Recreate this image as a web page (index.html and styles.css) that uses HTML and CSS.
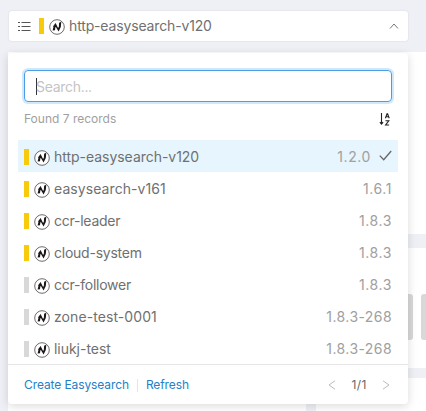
FILE: index.html
```html
<!DOCTYPE html>
<html lang="en">
<head>
<meta charset="utf-8">
<title>Cluster selector</title>
<link rel="stylesheet" href="styles.css">
</head>
<body>
<svg class="defs" width="0" height="0" aria-hidden="true">
  <symbol id="logo" viewBox="0 0 16 16">
    <circle cx="8" cy="8" r="7.3" fill="#fff" stroke="#4a4444" stroke-width=".8"/>
    <path d="M3.6 11.6 4.4 8.2 4.1 7.3 6.6 4 8.8 8.6 9.8 8.5 10.1 3.7 12.3 2.8 11.8 8 9.6 12.4 7.2 8.4 6.4 8 6 11.2Z" fill="#1c1718"/>
  </symbol>
</svg>
<header class="topbar">
  <div class="select">
    <svg class="list-icon" viewBox="0 0 13 11"><path d="M0 1.5H2M0 5.5H2M0 9.5H2M3.5 1.5H12.5M3.5 5.5H12.5M3.5 9.5H12.5"/></svg>
    <i class="status"></i><svg class="logo"><use href="#logo"/></svg>
    <span class="current">http-easysearch-v120</span>
    <svg class="chevron" viewBox="0 0 10 8"><path d="M1 6.5 5 2 9 6.5"/></svg>
  </div>
  <section class="dropdown">
    <div class="search"><i class="caret"></i><span>Search...</span></div>
    <div class="summary">
      <span>Found 7 records</span>
      <svg class="sort" viewBox="0 0 11 13"><path d="M2.5 0V11M.9 9.2 2.5 11.2 4.1 9.2M6.4 5.2 8 .8H8.6L10.2 5.2M7 3.8H9.6M6.5 7.8H9.8L6.6 12H10.1"/></svg>
    </div>
    <ul class="list">
      <li class="row selected"><i class="status"></i><svg class="logo"><use href="#logo"/></svg><span class="name">http-easysearch-v120</span><span class="version">1.2.0</span><svg class="check" viewBox="0 0 13 11"><path d="M.8 5.6 4.7 9.7 12.2 1"/></svg></li>
      <li class="row"><i class="status"></i><svg class="logo"><use href="#logo"/></svg><span class="name wide">easysearch-v161</span><span class="version">1.6.1</span></li>
      <li class="row"><i class="status"></i><svg class="logo"><use href="#logo"/></svg><span class="name tight">ccr-leader</span><span class="version">1.8.3</span></li>
      <li class="row"><i class="status"></i><svg class="logo"><use href="#logo"/></svg><span class="name tight">cloud-system</span><span class="version">1.8.3</span></li>
      <li class="row"><i class="status off"></i><svg class="logo"><use href="#logo"/></svg><span class="name tight">ccr-follower</span><span class="version">1.8.3</span></li>
      <li class="row"><i class="status off"></i><svg class="logo"><use href="#logo"/></svg><span class="name wide">zone-test-0001</span><span class="version long">1.8.3-268</span></li>
      <li class="row"><i class="status off"></i><svg class="logo"><use href="#logo"/></svg><span class="name">liukj-test</span><span class="version long">1.8.3-268</span></li>
    </ul>
    <footer class="footer">
      <a class="create">Create Easysearch</a><i class="divider"></i><a class="refresh">Refresh</a>
      <div class="pager">
        <svg viewBox="0 0 8 10"><path d="M7 .8 1 5 7 9.2"/></svg>
        <span>1/1</span>
        <svg viewBox="0 0 8 10"><path d="M1 .8 7 5 1 9.2"/></svg>
      </div>
    </footer>
  </section>
</header>
<main class="page">
  <div class="card overview"></div>
  <div class="card metrics"><i class="block"></i><i class="block last"></i></div>
  <div class="split"><div class="card"></div><div class="card"></div></div>
</main>
</body>
</html>
```

FILE: styles.css
```css
* { box-sizing: border-box; }
body {
  margin: 0;
  width: 426px;
  height: 411px;
  overflow: hidden;
  background: #eff0f5;
  color: #707070;
  font: 14px/20px Inter, "Liberation Sans", sans-serif;
}
svg { display: block; fill: none; flex: none; }
.defs { position: absolute; }
.topbar { position: relative; height: 52px; padding: 11px 18px 0 9px; }
.select {
  display: flex;
  align-items: center;
  height: 30px;
  padding: 0 9px;
  background: #fff;
  border-radius: 3px;
  box-shadow: 0 0 2px rgba(0, 0, 0, .12);
}
.list-icon { width: 13px; height: 11px; margin-right: 8px; stroke: #555; stroke-width: 1.1; }
.status { flex: none; width: 5px; height: 16px; margin-right: 5px; background: #f8ca0c; }
.status.off { background: #d8d8d8; }
.logo { width: 16px; height: 16px; margin: 2px 4px 0 0; }
.current { letter-spacing: -.15px; }
.chevron { width: 10px; height: 8px; margin-left: auto; stroke: #777; }
.dropdown {
  position: absolute;
  z-index: 1;
  top: 53px;
  left: 8px;
  width: 400px;
  height: 351px;
  padding-top: 17px;
  background: #fff;
  border-radius: 4px;
  box-shadow: 0 2px 10px rgba(0, 0, 0, .15);
}
.search {
  display: flex;
  align-items: center;
  height: 32px;
  margin: 0 16px;
  padding: 2px 11px 0;
  border: 1px solid #4b9ee5;
  border-radius: 4px;
  box-shadow: 0 0 0 2px #d0e8fc;
  color: #c4c4c4;
  letter-spacing: -.3px;
}
.caret { width: 1px; height: 17px; margin: -2px -1px 0 0; background: #333; }
.summary {
  display: flex;
  align-items: center;
  justify-content: space-between;
  height: 38px;
  padding: 0 18px 4px 16px;
  color: #a0a0a0;
  font-size: 12px;
}
.sort { width: 11px; height: 13px; stroke: #222; stroke-width: 1.1; }
.list { margin: 0; padding: 0 10px; list-style: none; }
.row { display: flex; align-items: center; height: 32px; padding: 2px 6px 0; }
.row .status { margin-top: 0; }
.selected { background: #e6f5fe; }
.name { letter-spacing: -.03px; }
.name.wide { letter-spacing: .08px; }
.name.tight { letter-spacing: -.24px; }
.version { margin-left: auto; color: #a0a0a0; letter-spacing: .6px; }
.version.long { letter-spacing: .42px; }
.check { width: 13px; height: 11px; margin: -3px 0 0 8px; stroke: #666; stroke-width: 1.3; }
.footer {
  display: flex;
  align-items: center;
  height: 40px;
  padding: 1px 18px 0 16px;
  border-top: 1px solid #e6e6e6;
  color: #2580c6;
  font-size: 12px;
  letter-spacing: -.1px;
}
.divider { width: 1px; height: 13px; margin: 0 8px; background: #e5e5e5; }
.pager { display: flex; align-items: center; gap: 15px; margin-left: auto; color: #666; letter-spacing: .5px; }
.pager svg { width: 8px; height: 10px; stroke: #bbb; }
.page { padding-left: 8px; }
.card { background: #fff; }
.overview { height: 182px; margin-bottom: 14px; }
.metrics { display: flex; justify-content: flex-end; gap: 8px; height: 120px; padding-top: 46px; margin-bottom: 10px; }
.block { width: 60px; height: 46px; background: #d8d8d8; border-radius: 3px; }
.block.last { width: 5px; border-radius: 3px 0 0 3px; }
.split { display: grid; grid-template-columns: 298px 1fr; gap: 10px; height: 33px; }
```
